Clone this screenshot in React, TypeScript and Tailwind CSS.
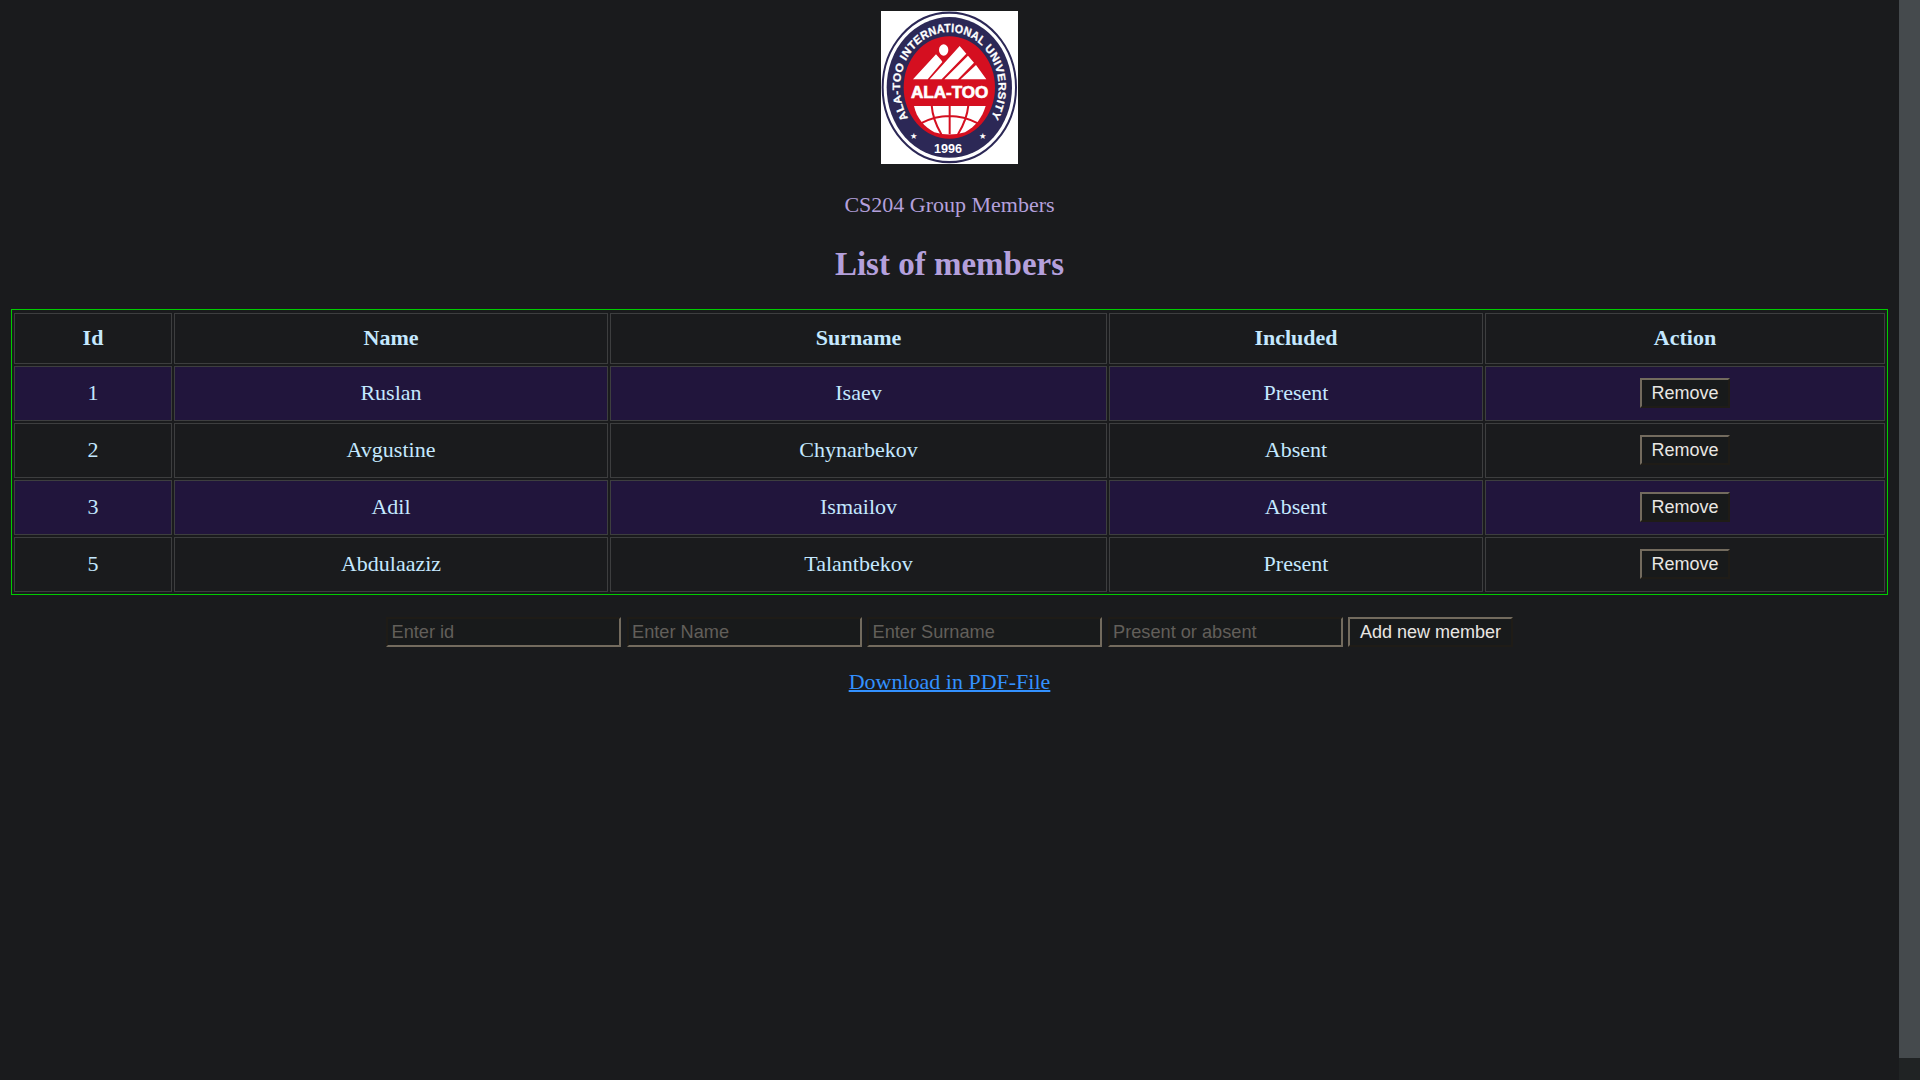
import React from "react";

type Member = { id: number; name: string; surname: string; included: string };

const members: Member[] = [
  { id: 1, name: "Ruslan", surname: "Isaev", included: "Present" },
  { id: 2, name: "Avgustine", surname: "Chynarbekov", included: "Absent" },
  { id: 3, name: "Adil", surname: "Ismailov", included: "Absent" },
  { id: 5, name: "Abdulaaziz", surname: "Talantbekov", included: "Present" },
];

const headers = ["Id", "Name", "Surname", "Included", "Action"];
const fields = ["Enter id", "Enter Name", "Enter Surname", "Present or absent"];

function Logo() {
  return (
    <svg width="137" height="153" viewBox="0 0 411 459" className="block bg-white">
      <defs>
        <path id="arc" d="M 81.6 313.7 A 148 148 0 1 1 328.4 313.7" />
      </defs>
      <g transform="translate(0 -31) scale(1 1.122)">
        <circle cx="205" cy="232" r="200" fill="#fff" stroke="#2c2856" strokeWidth="6" />
        <circle cx="205" cy="232" r="188" fill="#2c2856" />
        <circle cx="205" cy="232" r="137" fill="#d50f20" />
        <text fontFamily="Liberation Sans" fontWeight="700" fontSize="32" fill="#fff" stroke="#fff" strokeWidth="0.8">
          <textPath href="#arc" startOffset="0" textLength="634" lengthAdjust="spacing">
            ALA-TOO INTERNATIONAL UNIVERSITY
          </textPath>
        </text>
      </g>
      <ellipse cx="188" cy="117" rx="14" ry="17" fill="#fff" />
      <path d="M96 205 L165 130 L181 148 L184 153 L140 205 Z M146 205 L236 105 L256 128 L182 205 Z M190 205 L261 134 L279 155 L231 205 Z M239 205 L285 162 L316 205 Z" fill="#fff" />
      <text x="206" y="260" textAnchor="middle" textLength="232" lengthAdjust="spacingAndGlyphs" fontFamily="Liberation Sans" fontWeight="700" fontSize="50" fill="#fff" stroke="#fff" strokeWidth="2">
        ALA-TOO
      </text>
      <path d="M99 285 H314 C303 320 285 345 252 364 Q205 377 160 364 C129 347 107 321 99 285 Z" fill="#fff" />
      <g fill="none" stroke="#d50f20" strokeWidth="6">
        <path d="M206 283 V370 M152 283 Q155 325 181 370 M262 283 Q258 325 231 370 M119 337 Q205 293 291 337" />
      </g>
      <text x="98" y="383" textAnchor="middle" fontFamily="DejaVu Sans" fontSize="25" fill="#fff">★</text>
      <text x="305" y="383" textAnchor="middle" fontFamily="DejaVu Sans" fontSize="25" fill="#fff">★</text>
      <text x="201" y="426" textAnchor="middle" textLength="84" lengthAdjust="spacingAndGlyphs" fontFamily="Liberation Sans" fontWeight="700" fontSize="41" fill="#fff">
        1996
      </text>
    </svg>
  );
}

function Button({ children, className }: { children: React.ReactNode; className: string }) {
  return (
    <button
      className={
        "flex h-[30px] items-center justify-center border-2 border-t-[#736b5e] border-l-[#736b5e] border-r-[#1f1c17] border-b-[#1f1c17] bg-[#181a1b] font-['Liberation_Sans',sans-serif] text-[18px] leading-none whitespace-nowrap text-[#e8e6e3] " +
        className
      }
    >
      {children}
    </button>
  );
}

const cell = "flex items-center justify-center border border-[#3d3e3f] pb-[2px]";

export default function App() {
  return (
    <div className="flex h-[1080px] w-full overflow-hidden bg-[#1a1b1d] font-['Liberation_Serif',serif] text-[22px] leading-[26px]">
      <main className="flex w-[1899px] flex-col items-center pt-[11px]">
        <Logo />
        <p className="mt-[28px] text-[#b4a0dc]">CS204 Group Members</p>
        <h2 className="mt-[27px] text-[33px] leading-[38px] font-bold text-[#b4a0dc]">List of members</h2>
        <div className="mt-[26px] flex w-[1877px] flex-col gap-[2px] border border-[#00cc00] px-[2px] pt-[3px] pb-[2px] text-[#c4e8ff]">
          <div className="grid h-[51px] grid-cols-[158px_434px_497px_374px_400px] gap-[2px] font-bold">
            {headers.map((h) => (
              <div key={h} className={cell}>{h}</div>
            ))}
          </div>
          {members.map((m, i) => (
            <div
              key={m.id}
              className={"grid h-[55px] grid-cols-[158px_434px_497px_374px_400px] gap-[2px] " + (i % 2 === 0 ? "*:bg-[#21153c]" : "")}
            >
              <div className={cell}>{m.id}</div>
              <div className={cell}>{m.name}</div>
              <div className={cell}>{m.surname}</div>
              <div className={cell}>{m.included}</div>
              <div className={cell}>
                <Button className="w-[90px]">Remove</Button>
              </div>
            </div>
          ))}
        </div>
        <form className="mt-[22px] flex gap-[5.5px]">
          {fields.map((f) => (
            <input
              key={f}
              placeholder={f}
              className="h-[30px] w-[235px] border-2 border-t-[#1f1c17] border-r-[#736b5e] border-b-[#736b5e] border-l-[#1f1c17] bg-[#181a1b] px-[3.5px] font-['Liberation_Sans',sans-serif] text-[18.2px] leading-none text-[#e8e6e3] placeholder:text-[#625f5a]"
            />
          ))}
          <Button className="w-[165px]">Add new member</Button>
        </form>
        <a href="#" className="mt-[22px] text-[#3391ff] underline decoration-2">Download in PDF-File</a>
      </main>
      <div className="h-full w-[21px] bg-[#202324]">
        <div className="h-[1058px] bg-[#454a4d]" />
      </div>
    </div>
  );
}
